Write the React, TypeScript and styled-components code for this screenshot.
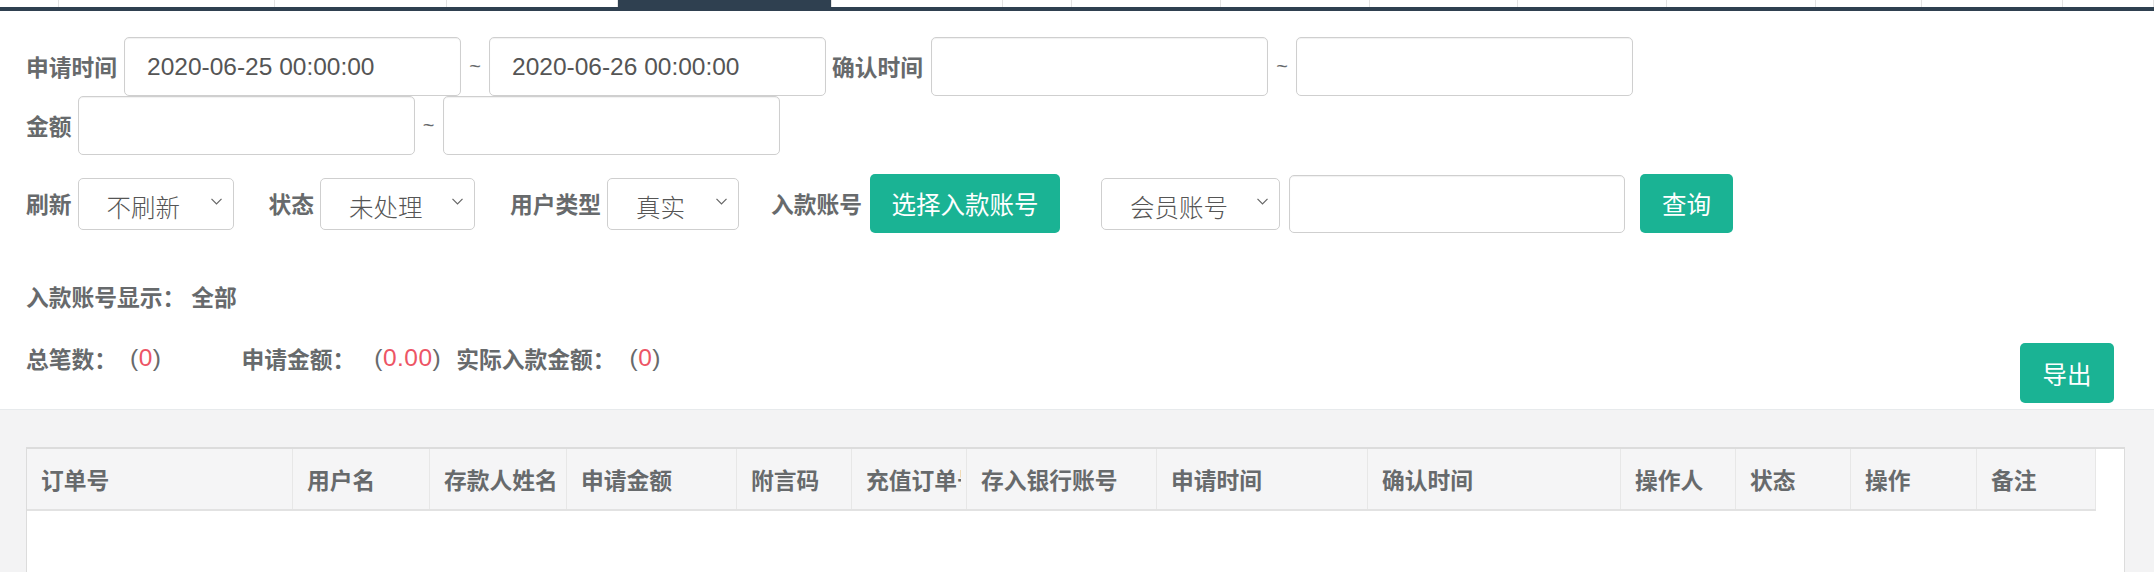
import React from "react";
import styled, { createGlobalStyle } from "styled-components";

const GlobalStyle = createGlobalStyle`
  html, body {
    margin: 0;
    padding: 0;
    background: #f3f3f4;
  }
  body {
    width: 2154px;
    height: 572px;
    overflow: hidden;
    font-family: "Liberation Sans", "Noto Sans CJK SC", sans-serif;
    color: #676a6c;
  }
  * { box-sizing: border-box; }
`;

const CJK = `"Noto Sans CJK SC", "Liberation Sans", sans-serif`;
const LATIN = `"Liberation Sans", "Noto Sans CJK SC", sans-serif`;
const GREEN = "#1ab394";
const TEXT = "#676a6c";

/* ---------- top tab strip ---------- */
const TabBar = styled.div`
  display: flex;
  height: 11px;
  background: #fff;
  border-bottom: 4px solid #2f4050;
`;

const Tab = styled.div<{ $w?: number; $active?: boolean }>`
  flex: ${(p) => (p.$w ? `0 0 ${p.$w}px` : "1 1 auto")};
  height: 100%;
  border-right: 1px solid #e3e3e3;
  background: ${(p) => (p.$active ? "#2f4050" : "#fff")};
`;

/* ---------- filter panel ---------- */
const FilterPanel = styled.section`
  background: #fff;
  border-bottom: 1px solid #e7eaec;
  padding: 26px 40px 6px 26px;
`;

const Row = styled.div<{ $mt?: number; $between?: boolean; $top?: boolean }>`
  display: flex;
  align-items: ${(p) => (p.$top ? "flex-start" : "center")};
  justify-content: ${(p) => (p.$between ? "space-between" : "flex-start")};
  margin-top: ${(p) => p.$mt ?? 0}px;
`;

const Label = styled.label<{ $ml?: number; $mr?: number }>`
  font-family: ${CJK};
  font-weight: 700;
  font-size: 22.75px;
  color: ${TEXT};
  white-space: nowrap;
  margin-left: ${(p) => p.$ml ?? 0}px;
  margin-right: ${(p) => p.$mr ?? 6}px;
`;

const TextInput = styled.input<{ $w?: number; $h?: number; $ml?: number }>`
  width: ${(p) => p.$w ?? 337}px;
  height: ${(p) => p.$h ?? 59}px;
  margin-left: ${(p) => p.$ml ?? 0}px;
  flex: none;
  border: 1.5px solid #cfcfcf;
  border-radius: 5px;
  padding: 0 22px;
  font-family: ${LATIN};
  font-size: 24.5px;
  color: #555;
  background: #fff;
  outline: none;
  box-shadow: inset 0 1px 1px rgba(0, 0, 0, 0.06);
`;

const Tilde = styled.span`
  width: 28px;
  flex: none;
  text-align: center;
  font-family: ${LATIN};
  font-size: 20px;
  color: ${TEXT};
`;

const SelectBox = styled.div<{ $w: number; $ml?: number }>`
  position: relative;
  width: ${(p) => p.$w}px;
  height: 52px;
  flex: none;
  margin-left: ${(p) => p.$ml ?? 0}px;
`;

const NativeSelect = styled.select`
  appearance: none;
  -webkit-appearance: none;
  width: 100%;
  height: 100%;
  border: 1.5px solid #cfcfcf;
  border-radius: 5px;
  background: #fff;
  padding: 6px 0 0 28px;
  font-family: ${CJK};
  font-weight: 300;
  font-size: 24.5px;
  color: #555;
  outline: none;
`;

const Chevron = styled.svg`
  position: absolute;
  right: 12px;
  top: 20px;
  width: 11px;
  height: 7px;
  pointer-events: none;
`;

const Button = styled.button<{ $w: number; $h?: number; $ml?: number }>`
  width: ${(p) => p.$w}px;
  height: ${(p) => p.$h ?? 59}px;
  margin-left: ${(p) => p.$ml ?? 0}px;
  flex: none;
  border: none;
  border-radius: 5px;
  background: ${GREEN};
  color: #fff;
  font-family: ${CJK};
  font-size: 24.5px;
  padding: 0;
  cursor: pointer;
`;

const InfoLine = styled.div`
  display: flex;
  align-items: center;
  height: 34px;
  font-family: ${CJK};
  font-weight: 700;
  font-size: 22.75px;
  color: ${TEXT};
  white-space: nowrap;
`;

const InfoValue = styled.span`
  margin-left: 6px;
`;

const Stats = styled.div`
  display: flex;
  align-items: center;
  height: 30px;
`;

const StatLabel = styled.span`
  font-family: ${CJK};
  font-weight: 700;
  font-size: 22.75px;
  color: ${TEXT};
  white-space: nowrap;
`;

const StatValue = styled.span<{ $ml: number; $mr?: number }>`
  font-family: ${LATIN};
  font-size: 24.5px;
  color: ${TEXT};
  letter-spacing: 0.5px;
  margin-left: ${(p) => p.$ml}px;
  margin-right: ${(p) => p.$mr ?? 0}px;
  white-space: nowrap;
`;

const Num = styled.span`
  color: #ed5565;
`;

/* ---------- table ---------- */
const TableArea = styled.section`
  padding: 37px 29px 0 26px;
`;

const TableFrame = styled.div`
  background: #fff;
  border: 1px solid #dcdcdc;
  border-top-width: 2px;
  border-bottom: none;
  height: 125px;
  overflow: hidden;
`;

const HeadRow = styled.div`
  display: flex;
  width: 2069px;
  height: 62px;
  background: #f5f5f6;
  border-bottom: 2px solid #e2e2e2;
`;

const HeadCell = styled.div<{ $w: number }>`
  flex: 0 0 ${(p) => p.$w}px;
  height: 100%;
  border-right: 1px solid #e7e7e7;
  padding: 0 5px 0 14px;
  display: flex;
  align-items: center;
  min-width: 0;
`;

const HeadText = styled.span`
  display: block;
  overflow: hidden;
  white-space: nowrap;
  max-width: 100%;
  font-family: ${CJK};
  font-weight: 700;
  font-size: 22.75px;
  color: ${TEXT};
`;

const TABS = [59, 216, 172, 171, 214, 171, 69, 149, 149, 148, 149, 149, 106, 141];
const ACTIVE_TAB = 4;

const COLUMNS = [
  { title: "订单号", w: 266 },
  { title: "用户名", w: 137 },
  { title: "存款人姓名", w: 137 },
  { title: "申请金额", w: 170 },
  { title: "附言码", w: 115 },
  { title: "充值订单号", w: 115 },
  { title: "存入银行账号", w: 190 },
  { title: "申请时间", w: 211 },
  { title: "确认时间", w: 253 },
  { title: "操作人", w: 115 },
  { title: "状态", w: 115 },
  { title: "操作", w: 126 },
  { title: "备注", w: 119 },
];

function Select({ w, ml, options }: { w: number; ml?: number; options: string[] }) {
  return (
    <SelectBox $w={w} $ml={ml}>
      <NativeSelect defaultValue={options[0]}>
        {options.map((o) => (
          <option key={o}>{o}</option>
        ))}
      </NativeSelect>
      <Chevron viewBox="0 0 11 7">
        <path d="M0.5 0.8 L5.5 6 L10.5 0.8" fill="none" stroke="#666" strokeWidth="1.2" />
      </Chevron>
    </SelectBox>
  );
}

export default function App() {
  return (
    <>
      <GlobalStyle />
      <TabBar>
        {TABS.map((w, i) => (
          <Tab key={i} $w={w} $active={i === ACTIVE_TAB} />
        ))}
        <Tab />
      </TabBar>

      <FilterPanel>
        <Row>
          <Label $mr={7}>申请时间</Label>
          <TextInput defaultValue="2020-06-25 00:00:00" />
          <Tilde>~</Tilde>
          <TextInput defaultValue="2020-06-26 00:00:00" />
          <Label $ml={6} $mr={8}>确认时间</Label>
          <TextInput />
          <Tilde>~</Tilde>
          <TextInput />
        </Row>
        <Row>
          <Label>金额</Label>
          <TextInput />
          <Tilde>~</Tilde>
          <TextInput />
        </Row>
        <Row $mt={19}>
          <Label>刷新</Label>
          <Select w={156} options={["不刷新", "10秒", "30秒"]} />
          <Label $ml={35}>状态</Label>
          <Select w={155} options={["未处理", "已处理", "全部"]} />
          <Label $ml={35}>用户类型</Label>
          <Select w={132} options={["真实", "测试"]} />
          <Label $ml={32} $mr={8}>入款账号</Label>
          <Button $w={190}>选择入款账号</Button>
          <Select w={179} ml={41} options={["会员账号", "订单号"]} />
          <TextInput $w={336} $h={58} $ml={9} />
          <Button $w={93} $ml={15}>查询</Button>
        </Row>
        <Row $mt={46}>
          <InfoLine>
            入款账号显示：<InfoValue>全部</InfoValue>
          </InfoLine>
        </Row>
        <Row $mt={30} $between $top>
          <Stats>
            <StatLabel>总笔数：</StatLabel>
            <StatValue $ml={13} $mr={80}>
              (<Num>0</Num>)
            </StatValue>
            <StatLabel>申请金额：</StatLabel>
            <StatValue $ml={19} $mr={15}>
              (<Num>0.00</Num>)
            </StatValue>
            <StatLabel>实际入款金额：</StatLabel>
            <StatValue $ml={14}>
              (<Num>0</Num>)
            </StatValue>
          </Stats>
          <Button $w={94} $h={60}>导出</Button>
        </Row>
      </FilterPanel>

      <TableArea>
        <TableFrame>
          <HeadRow>
            {COLUMNS.map((c) => (
              <HeadCell key={c.title} $w={c.w}>
                <HeadText>{c.title}</HeadText>
              </HeadCell>
            ))}
          </HeadRow>
        </TableFrame>
      </TableArea>
    </>
  );
}
